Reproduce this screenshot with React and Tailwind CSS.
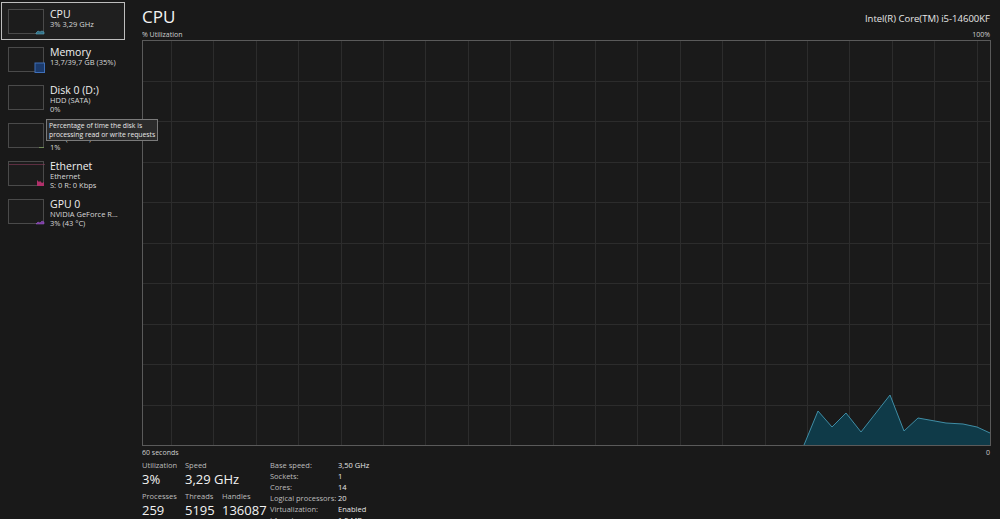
import React from "react";

const items = [
  { name: "CPU", lines: ["3% 3,29 GHz"], selected: true, spark: "cpu" },
  { name: "Memory", lines: ["13,7/39,7 GB (35%)"], spark: "mem" },
  { name: "Disk 0 (D:)", lines: ["HDD (SATA)", "0%"], spark: "disk" },
  { name: "Disk 1 (C:)", lines: ["SSD (NVMe)", "1%"], spark: "disk1" },
  { name: "Ethernet", lines: ["Ethernet", "S: 0 R: 0 Kbps"], spark: "eth" },
  { name: "GPU 0", lines: ["NVIDIA GeForce R...", "3% (43 °C)"], spark: "gpu" },
];

// sampled points of the cpu graph, relative to the chart box
const cpuPoints = [
  [662, 405],
  [676, 371],
  [690, 387],
  [704, 373],
  [719, 392],
  [748, 355],
  [762, 391],
  [776, 378],
  [804, 383],
  [821, 384],
  [835, 387],
  [848, 393],
];

const Spark = ({ kind }) => {
  // tiny graphs in the thumbnails
  if (kind === "cpu")
    return (
      <svg className="absolute inset-0" width="36" height="25">
        <path d="M27 23 L29 21 L31 22 L33 21 L35 22 L35 24 L27 24 Z" fill="#2f6f86" stroke="#5fa8c0" strokeWidth="0.6" />
      </svg>
    );
  if (kind === "mem")
    return (
      <svg className="absolute inset-0" width="36" height="25">
        <rect x="26" y="15" width="9.5" height="9.5" fill="#1b3a6b" stroke="#3f6fb8" strokeWidth="1" />
      </svg>
    );
  if (kind === "disk1")
    return (
      <svg className="absolute inset-0" width="36" height="25">
        <path d="M30 23.5 L35 23.5" stroke="#7a9a5a" strokeWidth="0.8" />
      </svg>
    );
  if (kind === "eth")
    return (
      <svg className="absolute inset-0" width="36" height="25">
        <path d="M0 2.5 L36 2.5" stroke="#8a3a5a" strokeWidth="0.6" />
        <path d="M28 24 L28 18 L30 20 L31 19 L33 21 L35 20 L35 24 Z" fill="#b0306a" />
      </svg>
    );
  if (kind === "gpu")
    return (
      <svg className="absolute inset-0" width="36" height="25">
        <path d="M27 24 L29 22 L31 23 L33 21 L35 22 L35 24 Z" fill="#7a3aa0" stroke="#a060d0" strokeWidth="0.5" />
      </svg>
    );
  return null;
};

const SideItem = ({ item }) => (
  <div
    className={
      "flex items-start gap-[6px] h-[38px] shrink-0 pl-[6px] pt-[6px] " +
      (item.selected ? "border border-[#bdbdbd] bg-[#1f1f1f]" : "border border-transparent")
    }
  >
    <div className="relative w-[36px] h-[25px] shrink-0 border border-[#4a4a4a] bg-[#1c1c1c]">
      <Spark kind={item.spark} />
    </div>
    <div className="flex flex-col leading-none -mt-[1px]">
      <span className="text-[10.5px] text-[#f0f0f0] leading-[12px]">{item.name}</span>
      {item.lines.map((l) => (
        <span key={l} className="text-[7.5px] text-[#d8d8d8] leading-[9px] whitespace-nowrap">
          {l}
        </span>
      ))}
    </div>
  </div>
);

const Chart = () => {
  const vLines = [];
  for (let i = 0; i < 20; i++) vLines.push(29 + i * 42.4);
  const hLines = [];
  for (let i = 1; i < 10; i++) hLines.push(i * 40.5);
  const area =
    "M" + cpuPoints.map((p) => p.join(" ")).join(" L") + " L848 405 Z";
  const line = "M" + cpuPoints.map((p) => p.join(" ")).join(" L");
  return (
    <svg width="849" height="406" className="block shrink-0">
      <rect x="0.5" y="0.5" width="848" height="405" fill="#1a1a1a" stroke="#5a5a5a" strokeWidth="1" />
      {vLines.map((x) => (
        <line key={x} x1={Math.round(x) + 0.5} y1="1" x2={Math.round(x) + 0.5} y2="405" stroke="#2c2c2c" strokeWidth="1" />
      ))}
      {hLines.map((y) => (
        <line key={y} x1="1" y1={Math.round(y) + 0.5} x2="848" y2={Math.round(y) + 0.5} stroke="#2c2c2c" strokeWidth="1" />
      ))}
      <path d={area} fill="#0f3a48" />
      <path d={line} fill="none" stroke="#3f8da5" strokeWidth="1" />
    </svg>
  );
};

const Stat = ({ label, value, w }) => (
  <div className={"flex flex-col " + w}>
    <span className="text-[7.5px] text-[#bdbdbd] leading-[10px]">{label}</span>
    <span className="text-[13px] text-[#f2f2f2] leading-[18px] whitespace-nowrap">{value}</span>
  </div>
);

const specs = [
  ["Base speed:", "3,50 GHz"],
  ["Sockets:", "1"],
  ["Cores:", "14"],
  ["Logical processors:", "20"],
  ["Virtualization:", "Enabled"],
  ["L1 cache:", "1,2 MB"],
];

export default function App() {
  return (
    <div
      className="w-[1000px] h-[519px] overflow-hidden bg-[#191919] flex text-white"
      style={{ fontFamily: '"Open Sans", "Noto Sans", sans-serif' }}
    >
      {/* sidebar */}
      <div className="relative w-[142px] shrink-0 pt-[2px] pl-[1px] pr-[17px] flex flex-col">
        {items.map((it) => (
          <SideItem key={it.name} item={it} />
        ))}

        {/* tooltip over disk 1 */}
        <div className="absolute left-[46px] top-[119px] whitespace-nowrap border border-[#7a7a7a] bg-[#2b2b2b] px-[2px] py-[1px] text-[6.8px] leading-[9px] text-[#e8e8e8]">
          Percentage of time the disk is
          <br />
          processing read or write requests
        </div>
      </div>

      {/* main panel */}
      <div className="flex-1 flex flex-col pr-[10px] overflow-hidden">
        <div className="flex items-end justify-between h-[28px] shrink-0">
          <span className="text-[17px] leading-[20px] text-[#f4f4f4] mb-[1px]">CPU</span>
          <span className="text-[9.5px] leading-[12px] text-[#e6e6e6] mb-[3px]">Intel(R) Core(TM) i5-14600KF</span>
        </div>
        <div className="flex justify-between shrink-0 text-[7px] leading-[9px] text-[#cfcfcf] mt-[2px] mb-[1px]">
          <span>% Utilization</span>
          <span>100%</span>
        </div>
        <Chart />
        <div className="flex justify-between shrink-0 text-[7px] leading-[9px] text-[#cfcfcf] mt-[2px]">
          <span>60 seconds</span>
          <span>0</span>
        </div>

        {/* stats */}
        <div className="flex shrink-0 mt-[3px]">
          <div className="flex flex-col gap-[3px] w-[128px]">
            <div className="flex">
              <Stat label="Utilization" value="3%" w="w-[43px]" />
              <Stat label="Speed" value="3,29 GHz" w="w-[60px]" />
            </div>
            <div className="flex">
              <Stat label="Processes" value="259" w="w-[43px]" />
              <Stat label="Threads" value="5195" w="w-[37px]" />
              <Stat label="Handles" value="136087" w="w-[48px]" />
            </div>
          </div>
          <div className="flex flex-col">
            {specs.map(([k, v]) => (
              <div key={k} className="flex text-[7.5px] leading-[11px]">
                <span className="w-[68px] text-[#bdbdbd]">{k}</span>
                <span className="text-[#e6e6e6]">{v}</span>
              </div>
            ))}
          </div>
        </div>
      </div>
    </div>
  );
}
